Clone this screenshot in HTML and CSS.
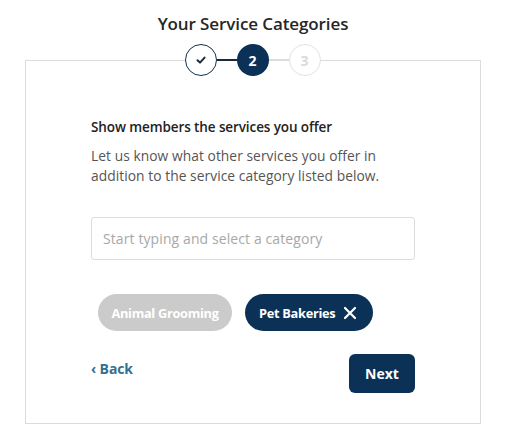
FILE: index.html
```html
<!DOCTYPE html>
<html lang="en">
<head>
<meta charset="utf-8">
<title>Your Service Categories</title>
<link rel="stylesheet" href="styles.css">
</head>
<body>
<main class="page">
  <h1 class="title">Your Service Categories</h1>
  <section class="card">
    <div class="stepper">
      <span class="step step-done">
        <svg width="12" height="10" viewBox="0 0 12 10"><path d="M2.5 5.2 L5 7.6 L9.6 2.6" fill="none" stroke="#1c2b3a" stroke-width="2" stroke-linecap="round" stroke-linejoin="round"/></svg>
      </span>
      <span class="link link-done"></span>
      <span class="step step-current">2</span>
      <span class="link"></span>
      <span class="step step-todo">3</span>
    </div>
    <h2 class="heading">Show members the services you offer</h2>
    <p class="intro">Let us know what other services you offer in addition to the service category listed below.</p>
    <div class="field">
      <input class="input" type="text" placeholder="Start typing and select a category">
    </div>
    <div class="chips">
      <span class="chip chip-disabled">Animal Grooming</span>
      <span class="chip chip-active">Pet Bakeries
        <svg width="14" height="14" viewBox="0 0 14 14"><path d="M2 2 L12 12 M12 2 L2 12" stroke="#fff" stroke-width="2.2" stroke-linecap="round"/></svg>
      </span>
    </div>
    <div class="actions">
      <a class="back" href="#">&#8249; Back</a>
      <button class="next" type="button">Next</button>
    </div>
  </section>
</main>
</body>
</html>
```
FILE: styles.css
```css
* { box-sizing: border-box; }
html, body { margin: 0; padding: 0; background: #fff; }
body {
  font-family: "Open Sans", "Noto Sans", "Liberation Sans", sans-serif;
  color: #222;
}
.page {
  width: 512px;
  padding: 12px 0 0 25px;
}
.title {
  margin: 0;
  width: 456px;
  text-align: center;
  font-size: 17px;
  line-height: 24px;
  font-weight: 600;
  color: #262626;
  letter-spacing: -0.1px;
}
.card {
  margin-top: 24px;
  width: 456px;
  height: 364px;
  border: 1px solid #dcdcdc;
  padding: 0 65px;
}
.stepper {
  display: flex;
  align-items: center;
  justify-content: center;
  margin-top: -17px;
  margin-left: -1px;
  height: 32px;
}
.step {
  width: 32px;
  height: 32px;
  border-radius: 50%;
  display: flex;
  align-items: center;
  justify-content: center;
  font-size: 14px;
  font-weight: 700;
  background: #fff;
}
.step-done { border: 1.5px solid #13304f; }
.step-current { background: #0c3156; color: #fff; }
.step-todo { border: 1.5px solid #e2e2e2; color: #dadada; }
.link {
  width: 20px;
  height: 1.5px;
  background: #dcdcdc;
}
.link-done { background: #1a2a3a; }
.heading {
  margin: 41px 0 0 0;
  font-size: 13.5px;
  line-height: 20px;
  font-weight: 600;
  color: #222;
  letter-spacing: -0.1px;
}
.intro {
  margin: 9px 0 0 0;
  font-size: 13.8px;
  line-height: 20px;
  color: #555;
  letter-spacing: 0.05px;
}
.field { margin-top: 31px; }
.input {
  display: block;
  width: 324px;
  height: 43px;
  border: 1px solid #dcdcdc;
  border-radius: 3px;
  padding: 0 11px;
  font-family: inherit;
  font-size: 14px;
  letter-spacing: 0.1px;
  color: #333;
  background: #fff;
}
.input::placeholder { color: #a8a8a8; }
.chips {
  display: flex;
  gap: 13px;
  margin-top: 34px;
  padding-left: 7px;
}
.chip {
  height: 37px;
  border-radius: 19px;
  display: inline-flex;
  align-items: center;
  gap: 8px;
  font-size: 12.8px;
  font-weight: 700;
  color: #fff;
  letter-spacing: -0.3px;
  white-space: nowrap;
}
.chip-disabled { background: #cbcbcb; width: 134px; justify-content: center; }
.chip-active { background: #0c3156; padding: 0 14px 0 14px; width: 128px; }
.actions {
  display: flex;
  justify-content: space-between;
  align-items: flex-start;
  margin-top: 23px;
}
.back {
  margin-top: 5px;
  font-size: 14px;
  font-weight: 700;
  color: #35708f;
  text-decoration: none;
  letter-spacing: -0.1px;
}
.next {
  width: 66px;
  height: 39px;
  border: none;
  border-radius: 6px;
  background: #0c3156;
  color: #fff;
  font-family: inherit;
  font-size: 14px;
  font-weight: 700;
  padding: 0;
}
```
